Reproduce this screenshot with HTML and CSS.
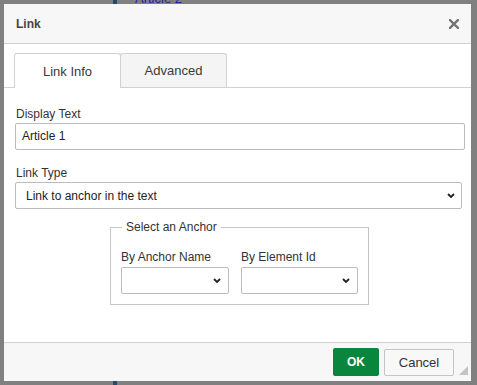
FILE: index.html
```html
<!DOCTYPE html>
<html>
<head>
<meta charset="utf-8">
<link rel="stylesheet" href="styles.css">
</head>
<body>
<div class="page">
  <div class="doc">
    <div class="doc-bar"></div>
    <div class="doc-link">Article 2</div>
  </div>
  <div class="dialog">
    <div class="titlebar">
      <span class="title">Link</span>
      <svg class="close" width="10" height="10" viewBox="0 0 10 10"><path d="M1 1 L9 9 M9 1 L1 9" stroke="#737373" stroke-width="2.4" stroke-linecap="square"/></svg>
    </div>
    <div class="tabs">
      <div class="tab tab-active">Link Info</div>
      <div class="tab">Advanced</div>
    </div>
    <div class="body">
      <div class="label">Display Text</div>
      <div class="input">Article 1</div>
      <div class="label label-gap">Link Type</div>
      <div class="select select-wide"><span>Link to anchor in the text</span><svg class="chev" width="8" height="5" viewBox="0 0 8 5"><path d="M1 1 L4 4 L7 1" fill="none" stroke="#222" stroke-width="1.8"/></svg></div>
      <fieldset class="anchors">
        <legend>Select an Anchor</legend>
        <div class="cols">
          <div class="col col-a">
            <div class="label">By Anchor Name</div>
            <div class="select"><span></span><svg class="chev" width="8" height="5" viewBox="0 0 8 5"><path d="M1 1 L4 4 L7 1" fill="none" stroke="#222" stroke-width="1.8"/></svg></div>
          </div>
          <div class="col col-b">
            <div class="label">By Element Id</div>
            <div class="select"><span></span><svg class="chev" width="8" height="5" viewBox="0 0 8 5"><path d="M1 1 L4 4 L7 1" fill="none" stroke="#222" stroke-width="1.8"/></svg></div>
          </div>
        </div>
      </fieldset>
    </div>
    <div class="footer">
      <div class="btn btn-ok">OK</div>
      <div class="btn btn-cancel">Cancel</div>
      <svg class="resizer" width="9" height="9" viewBox="0 0 9 9"><path d="M9 0 L9 9 L0 9 Z" fill="#c4c4c4"/></svg>
    </div>
  </div>
</div>
</body>
</html>
```

FILE: styles.css
```css
html, body {
  margin: 0;
  padding: 0;
}
body {
  background: #808080;
  font-family: "Liberation Sans", Arial, sans-serif;
}
.page {
  position: relative;
  width: 477px;
  height: 385px;
  overflow: hidden;
}
.doc {
  display: flex;
  height: 385px;
  padding-left: 113px;
  box-sizing: border-box;
}
.doc-bar {
  width: 4px;
  background: #1d4b73;
}
.doc-link {
  margin-left: 18px;
  margin-top: -9px;
  font-size: 13px;
  line-height: 15px;
  color: #23239c;
  height: 15px;
}
.dialog {
  position: absolute;
  left: 4px;
  top: 4px;
  width: 467px;
  height: 377px;
  background: #fff;
  display: flex;
  flex-direction: column;
  color: #333;
}
.titlebar {
  height: 39px;
  background: #f7f7f7;
  border-bottom: 1px solid #d1d1d1;
  display: flex;
  align-items: center;
  justify-content: space-between;
  padding: 0 12px;
}
.title {
  font-size: 12px;
  font-weight: bold;
  color: #444;
}
.tabs {
  height: 34px;
  border-bottom: 1px solid #d1d1d1;
  padding: 9px 0 0 10px;
  display: flex;
  align-items: flex-end;
}
.tab {
  width: 107px;
  height: 35px;
  box-sizing: border-box;
  border: 1px solid #d1d1d1;
  border-bottom: none;
  border-radius: 3px 3px 0 0;
  background: #f4f4f4;
  margin-bottom: -1px;
  display: flex;
  align-items: center;
  justify-content: center;
  font-size: 13px;
  color: #3a3a3a;
}
.tab + .tab {
  margin-left: -1px;
  height: 34px;
  margin-bottom: 0;
}
.tab-active {
  background: #fff;
  height: 35px;
}
.body {
  flex: 1;
  padding: 18px 0 0 11px;
}
.label {
  font-size: 12px;
  line-height: 17px;
  height: 17px;
  padding-left: 1px;
  color: #333;
}
.label-gap {
  margin-top: 15px;
}
.input {
  width: 450px;
  height: 27px;
  box-sizing: border-box;
  border: 1px solid #bcbcbc;
  border-radius: 2px;
  padding-left: 6px;
  font-size: 12px;
  line-height: 25px;
  color: #222;
}
.select {
  height: 27px;
  box-sizing: border-box;
  border: 1px solid #bcbcbc;
  border-radius: 2px;
  display: flex;
  align-items: center;
  justify-content: space-between;
  padding: 0 6px 0 10px;
  font-size: 12px;
  color: #222;
}
.select-wide {
  width: 447px;
}
.chev {
  display: block;
}
.anchors {
  width: 259px;
  box-sizing: border-box;
  margin: 11px 0 0 95px;
  padding: 15px 10px 10px 10px;
  border: 1px solid #c4c4c4;
}
.anchors legend {
  font-size: 12px;
  line-height: 14px;
  padding: 0 4px;
  margin-left: 1px;
  color: #333;
}
.cols {
  display: flex;
  gap: 12px;
}
.col-a {
  width: 108px;
}
.col-b {
  width: 117px;
}
.col .label {
  padding-left: 0;
  margin-bottom: 1px;
}
.col .select {
  padding-right: 7px;
}
.footer {
  height: 38px;
  background: #f7f7f7;
  border-top: 1px solid #d1d1d1;
  display: flex;
  align-items: center;
  justify-content: flex-end;
  padding-right: 3px;
}
.btn {
  height: 28px;
  box-sizing: border-box;
  display: flex;
  align-items: center;
  justify-content: center;
  border-radius: 2px;
}
.btn-ok {
  width: 46px;
  background: #09863e;
  color: #fff;
  font-size: 12px;
  font-weight: bold;
  margin-right: 5px;
}
.btn-cancel {
  width: 70px;
  height: 27px;
  border: 1px solid #c4c4c4;
  background: #f8f8f8;
  color: #333;
  font-size: 13px;
  margin-right: 5px;
}
.resizer {
  align-self: flex-end;
  margin-bottom: 6px;
}
```
